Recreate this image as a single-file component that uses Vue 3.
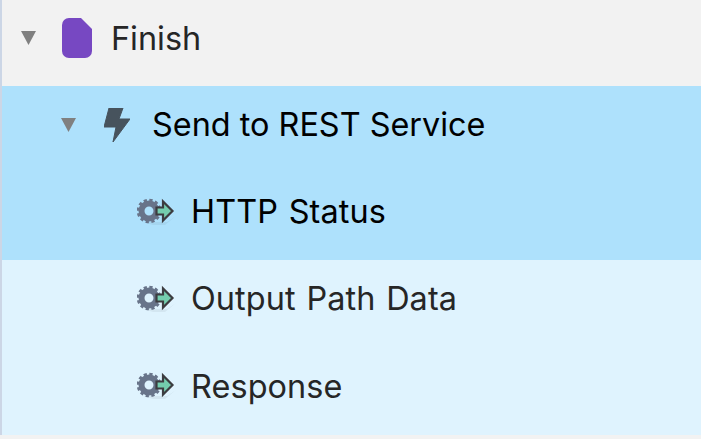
<template>
	<div class="tree">
		<div v-for="row in rows" :key="row.label" class="row" :class="[row.level, row.tone]">
			<span class="caret-slot">
				<svg v-if="row.caret" width="15" height="14" viewBox="0 0 15 14"><path d="M0 0H15L7.5 14Z" fill="#808080" /></svg>
			</span>
			<span class="icon-slot">
				<svg v-if="row.icon === 'doc'" width="30" height="40" viewBox="0 0 30 40">
					<path d="M7 0H19L30 11V33A7 7 0 0 1 23 40H7A7 7 0 0 1 0 33V7A7 7 0 0 1 7 0Z" fill="#7748c2" />
				</svg>
				<svg v-else-if="row.icon === 'bolt'" width="26" height="34" viewBox="0 0 26 34">
					<path d="M5 0H19L15 11H26L9 34L12 19H0Z" fill="#47535d" stroke="#47535d" stroke-width="1" stroke-linejoin="round" />
				</svg>
				<svg v-else width="40" height="30" viewBox="0 0 40 30">
					<path d="M6 25L16 28H28L39 19L30 25H16Z" fill="#000" opacity="0.05" />
					<circle cx="12" cy="14" r="7.5" fill="none" stroke="#68748a" stroke-width="6" />
					<circle cx="12" cy="14" r="10.5" fill="none" stroke="#68748a" stroke-width="3.6" stroke-dasharray="3.1 2.4" />
					<path d="M19.5 10.5H26V4.5L35.5 14L26 23.5V17.5H19.5Z" fill="#74cdae" stroke="#3c3c40" stroke-width="2.2" />
				</svg>
			</span>
			<span class="label">{{ row.label }}</span>
		</div>
	</div>
</template>

<script setup>
	const rows = [
		{ label: "Finish", level: "level-0", tone: "plain", caret: true, icon: "doc" },
		{ label: "Send to REST Service", level: "level-1", tone: "selected", caret: true, icon: "bolt" },
		{ label: "HTTP Status", level: "level-2", tone: "selected", caret: false, icon: "gear" },
		{ label: "Output Path Data", level: "level-2", tone: "child", caret: false, icon: "gear" },
		{ label: "Response", level: "level-2", tone: "child", caret: false, icon: "gear" },
	];
</script>

<style>
	html,
	body {
		background: #f2f2f2;
		overflow: hidden;
	}
</style>

<style scoped>
	.tree {
		border-left: 2px solid #ccd6e6;
		height: 435px;
		display: flex;
		flex-direction: column;
		font-family: Inter, "Noto Sans", sans-serif;
		font-size: 32.4px;
	}
	.row {
		box-sizing: border-box;
		flex: 0 0 87px;
		display: flex;
		align-items: center;
		padding-bottom: 10px;
		color: #262626;
	}
	.row:last-child {
		flex: 1 1 0;
	}
	.plain {
		flex: 0 0 86px;
		background: #f2f2f2;
	}
	.selected {
		background: #aee1fc;
		color: #000;
	}
	.child {
		background: #dff3fe;
	}
	.level-0 {
		padding-left: 19px;
	}
	.level-0 .label {
		margin-left: -1px;
	}
	.level-1,
	.level-2 {
		padding-left: 59px;
	}
	.level-2 .label {
		letter-spacing: 0.1px;
		word-spacing: 1.5px;
	}
	.caret-slot {
		width: 15px;
		display: flex;
	}
	.icon-slot {
		display: flex;
		align-items: center;
		margin-left: 26px;
		margin-right: 20px;
	}
	.level-1 .icon-slot {
		margin-left: 28px;
		margin-right: 22px;
	}
	.level-2 .icon-slot {
		margin-left: 61px;
		margin-right: 0;
		width: 54px;
	}
	.label {
		white-space: nowrap;
	}
</style>
